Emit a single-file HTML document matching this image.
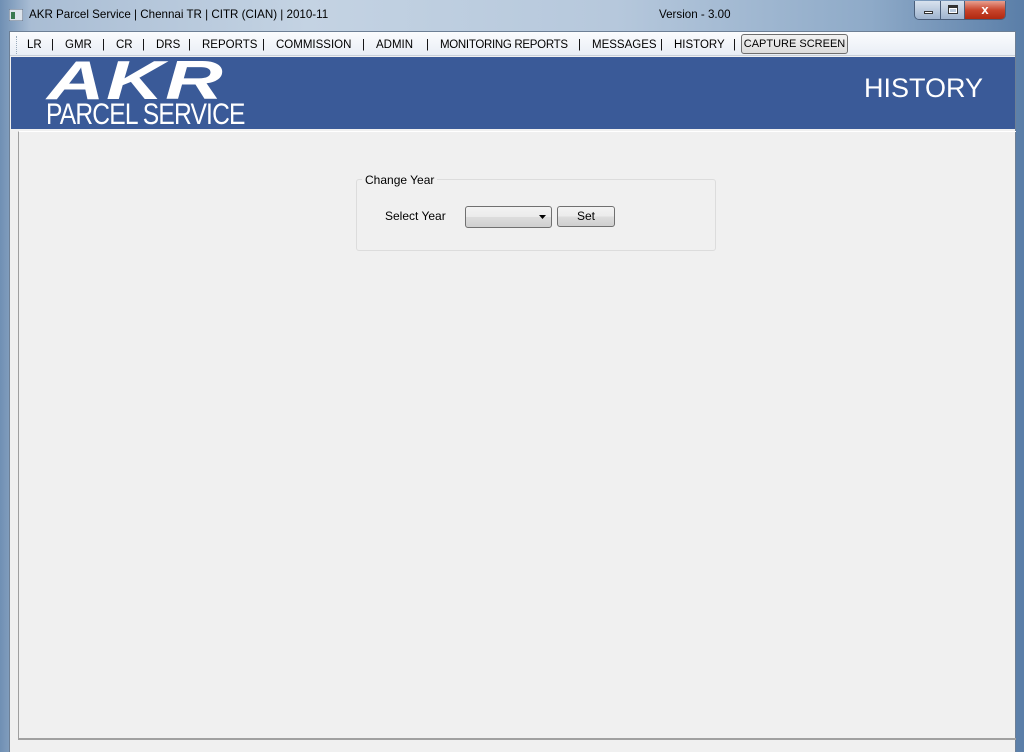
<!DOCTYPE html>
<html><head><style>
*{margin:0;padding:0;box-sizing:border-box}
body{width:1024px;height:752px;overflow:hidden;font-family:"Liberation Sans",sans-serif;background:#2a5a90;position:relative}
.frame{position:absolute;left:0;top:0;width:1024px;height:752px;background:linear-gradient(90deg,#6f8fb3 0,#a9bdd4 3%,#c4d3e3 30%,#b6c8dc 60%,#8eaac8 85%,#5a7ea8 100%)}
.title{position:absolute;left:29px;top:8px;font-size:11.6px;color:#000}
.ver{position:absolute;left:659px;top:8px;font-size:11.6px;color:#000}
.client{position:absolute;left:9px;top:31px;width:1007px;height:721px;background:#f0f0f0;border-left:1px solid #6d7f95;border-top:1px solid #6d7f95;border-right:1px solid #6d7f95}
.menu{position:absolute;left:0;top:0;width:100%;height:24px;background:linear-gradient(#fbfcfe,#e9eef5);font-size:11.5px;color:#000;border-bottom:1px solid #c8d0da}
.menu span{position:absolute;top:7px;white-space:nowrap}
.cap{position:absolute;left:731px;top:2px;width:107px;height:20px;border:1px solid #6e6e6e;border-radius:3px;background:linear-gradient(#f2f2f2,#dcdcdc);font-size:11px;text-align:center;line-height:18px;white-space:nowrap}
.banner{position:absolute;left:1px;top:25px;width:1004px;height:72px;background:#3a5a98;overflow:hidden}
.hist{position:absolute;right:32px;top:16px;color:#fff;font-size:27px}
.panel{position:absolute;left:8px;top:99px;width:998px;height:609px;border-left:1px solid #a0a0a0;border-bottom:2px solid #a0a0a0;border-top:1px solid #fff}
.grp{position:absolute;left:356px;top:179px;width:360px;height:72px;border:1px solid #dcdcdc;border-radius:3px}
.btn{position:absolute;border:1px solid #707070;border-radius:3px;background:linear-gradient(#f3f3f3 0,#ebebeb 50%,#dddddd 51%,#cfcfcf 100%)}
</style></head><body>
<div class="frame"></div>
<svg style="position:absolute;left:9px;top:9px" width="14" height="12"><rect x="0" y="0" width="14" height="12" fill="#dde4ec" stroke="#5a6a80"/><rect x="2" y="3" width="4" height="7" fill="#3a7a50"/></svg>
<div class="title">AKR Parcel Service | Chennai TR | CITR (CIAN) | 2010-11</div>
<div class="ver">Version - 3.00</div>
<div style="position:absolute;left:914px;top:1px;width:92px;height:19px;border:1px solid #4a5e7a;border-top:none;border-radius:0 0 5px 5px;overflow:hidden;display:flex">
<div style="width:26px;background:linear-gradient(#d8e2ee,#9fb4cf);border-right:1px solid #4a5e7a;position:relative"><div style="position:absolute;left:9px;top:10px;width:9px;height:3px;background:#fff;border:1px solid #333"></div></div>
<div style="width:24px;background:linear-gradient(#d8e2ee,#9fb4cf);border-right:1px solid #4a5e7a;position:relative"><div style="position:absolute;left:7px;top:4px;width:10px;height:9px;border:1px solid #333;border-top-width:3px;background:none;box-shadow:0 0 0 1px #fff inset"></div></div>
<div style="flex:1;background:linear-gradient(#e8a090,#c8452c 50%,#b02810);color:#fff;font-size:13px;font-weight:bold;text-align:center;line-height:17px">x</div>
</div>
<div class="client">
<div class="menu">
<span style="left:6px;top:4px;height:18px;border-left:1px dotted #9ab"></span>
<span style="left:17px">LR</span><span style="left:41px">|</span>
<span style="left:55px">GMR</span><span style="left:92px">|</span>
<span style="left:106px">CR</span><span style="left:132px">|</span>
<span style="left:146px">DRS</span><span style="left:178px">|</span>
<span style="left:192px">REPORTS</span><span style="left:252px">|</span>
<span style="left:266px">COMMISSION</span><span style="left:352px">|</span>
<span style="left:366px">ADMIN</span><span style="left:416px">|</span>
<span style="left:430px;letter-spacing:-0.3px">MONITORING REPORTS</span><span style="left:568px">|</span>
<span style="left:582px">MESSAGES</span><span style="left:650px">|</span>
<span style="left:664px">HISTORY</span><span style="left:723px">|</span>
<div class="cap">CAPTURE SCREEN</div>
</div>
<div class="banner">
<div style="position:absolute;left:36px;top:-9px;color:#fff;font-size:55px;font-weight:bold;font-style:italic;letter-spacing:1px;transform:scaleX(1.45);transform-origin:left">AKR</div>
<div style="position:absolute;left:35px;top:41px;color:#fff;font-size:30px;letter-spacing:-1px;transform:scaleX(0.82);transform-origin:left">PARCEL SERVICE</div>
<div class="hist">HISTORY</div>
</div>
<div class="panel"></div>
</div>
<div class="grp"></div>
<div style="position:absolute;left:362px;top:173px;background:#f0f0f0;padding:0 3px;font-size:12px">Change Year</div>
<div style="position:absolute;left:385px;top:209px;font-size:12px">Select Year</div>
<div class="btn" style="left:465px;top:206px;width:87px;height:22px"><svg style="position:absolute;right:4px;top:8px" width="8" height="5"><path d="M0 0H7L3.5 4Z" fill="#000"/></svg></div>
<div class="btn" style="left:557px;top:206px;width:58px;height:21px;font-size:12px;text-align:center;line-height:19px">Set</div>
</body></html>
